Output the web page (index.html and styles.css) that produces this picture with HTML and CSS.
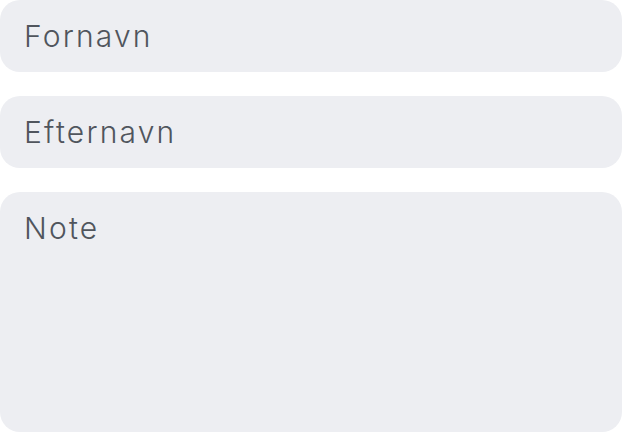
FILE: index.html
```html
<!DOCTYPE html>
<html lang="da">
<head>
    <meta charset="UTF-8">
    <meta name="viewport" content="width=device-width, initial-scale=1.0">
    <title>Kontakt</title>
    <link rel="stylesheet" href="styles.css">
</head>
<body>
    <form class="contact-form">
        <input class="field" type="text" placeholder="Fornavn">
        <input class="field" type="text" placeholder="Efternavn">
        <textarea class="field note" placeholder="Note"></textarea>
    </form>
</body>
</html>
```

FILE: styles.css
```css
body {
    margin: 0;
    background-color: #fff;
    font-family: Inter, Lato, sans-serif;
}

.contact-form {
    display: flex;
    flex-direction: column;
    gap: 24px;
}

.field {
    box-sizing: border-box;
    width: 100%;
    height: 72px;
    margin: 0;
    padding: 0 24px;
    border: none;
    border-radius: 20px;
    background-color: #edeef2;
    color: #4b5058;
    font-family: inherit;
    font-size: 30px;
    font-weight: 300;
    letter-spacing: 2.2px;
    outline: none;
}

.field::placeholder {
    color: #50555d;
    opacity: 1;
}

.note {
    height: 240px;
    padding-top: 18px;
    resize: none;
}
```
